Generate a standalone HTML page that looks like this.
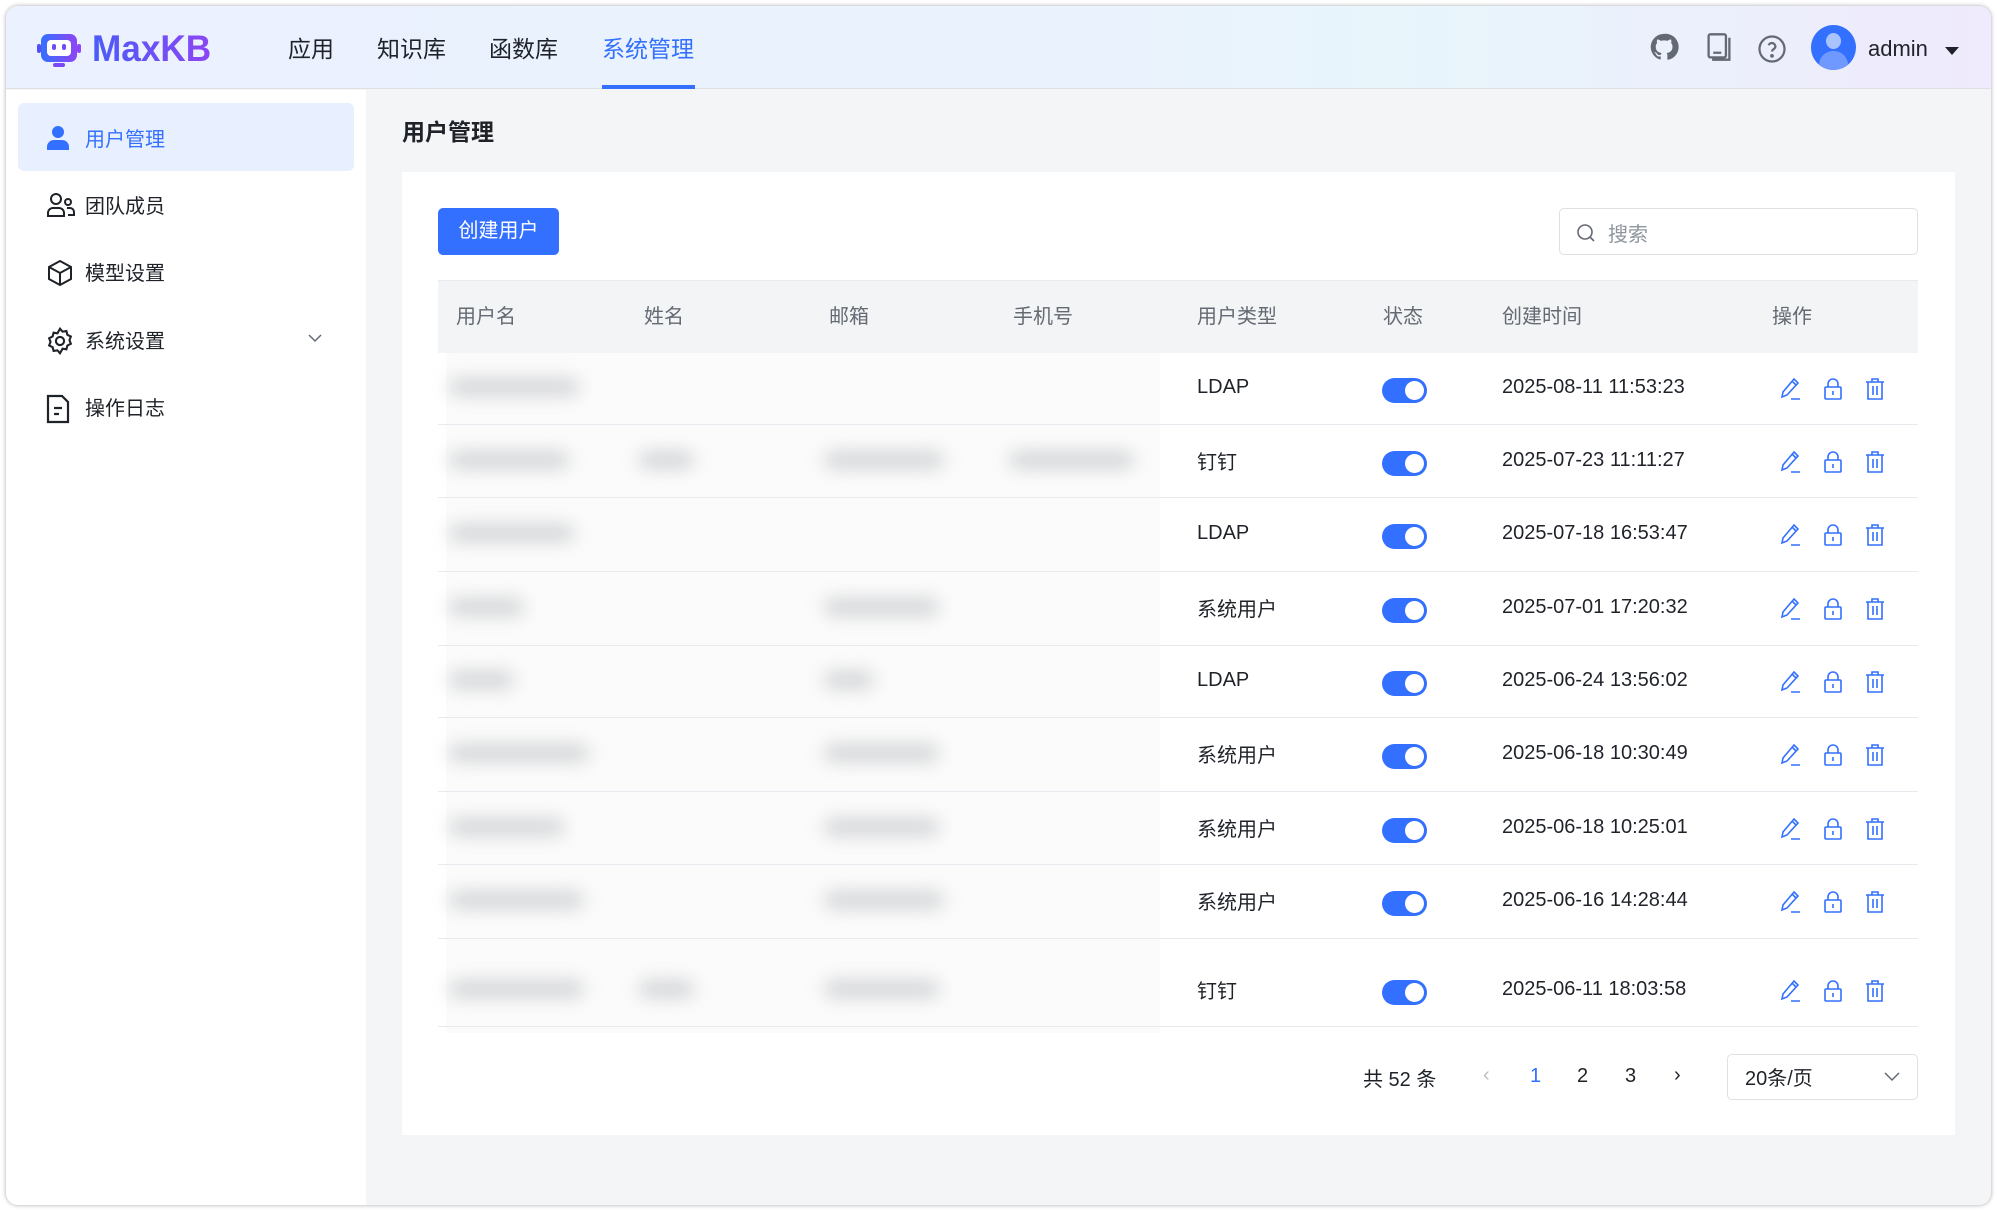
<!DOCTYPE html>
<html><head><meta charset="utf-8"><style>
*{box-sizing:border-box;margin:0;padding:0}
body{width:1997px;height:1211px;background:#fff;font-family:"Liberation Sans","Noto Sans CJK SC",sans-serif;color:#1f2329;position:relative;overflow:hidden}
.app{position:absolute;left:6px;top:6px;width:1985px;height:1199px;border-radius:12px;overflow:hidden;background:#f4f5f7;box-shadow:0 0 4px rgba(0,0,0,.35)}
.hdr{position:absolute;left:0;top:0;width:100%;height:83px;background:linear-gradient(90deg,#ebf1ff 0%,#eaf2fd 55%,#e8f5fb 70%,#efeafc 100%);border-bottom:1px solid #dee0e3}
.abs{position:absolute}
.nav{position:absolute;top:24px;font-size:23px;color:#1f2329}
.side{position:absolute;left:0;top:84px;width:360px;height:1115px;background:#fff}
.si{position:absolute;left:12px;width:336px;height:68px;font-size:20px;display:flex;align-items:center;padding-left:67px;border-radius:6px}
.si svg{position:absolute;left:28px;top:22px}
.card{position:absolute;left:396px;top:166px;width:1553px;height:963px;background:#fff}
.th{position:absolute;font-size:20px;color:#646a73}
.cell{position:absolute;font-size:20px;color:#1f2329}
.line{position:absolute;left:36px;width:1480px;height:1px;background:#e8eaef}
.tg{position:absolute;left:980px;width:45px;height:25px;border-radius:13px;background:#3370ff}
.tg:after{content:"";position:absolute;right:3px;top:3px;width:19px;height:19px;border-radius:50%;background:#fff}
.blob{position:absolute;height:16px;background:#cfd1d3;filter:blur(9px);border-radius:8px}
</style></head><body>
<div class="app">
<div class="hdr">
 <svg class="abs" style="left:30px;top:26px" width="46" height="40" viewBox="0 0 46 40"><defs><linearGradient id="lg" x1="0" x2="1"><stop offset="0" stop-color="#3370ff"/><stop offset="1" stop-color="#8e45f5"/></linearGradient></defs><rect x="5" y="2" width="36" height="28" rx="7" fill="url(#lg)"/><rect x="11" y="8" width="24" height="16" rx="4" fill="#fff"/><rect x="16" y="12" width="4" height="6" rx="2" fill="#6b4cf6"/><rect x="26" y="12" width="4" height="6" rx="2" fill="#6b4cf6"/><rect x="1" y="12" width="4" height="9" rx="2" fill="#5a4cf5"/><rect x="41" y="12" width="4" height="9" rx="2" fill="#8e45f5"/><rect x="17" y="31" width="12" height="4" rx="2" fill="#7a48f5"/></svg>
 <div class="abs" style="left:86px;top:22px;font-size:37px;font-weight:bold;background:linear-gradient(90deg,#4a5cf7,#8c46f5);-webkit-background-clip:text;color:transparent;transform:scaleX(0.95);transform-origin:left">MaxKB</div>
 <div class="nav" style="left:282px">应用</div>
 <div class="nav" style="left:371px">知识库</div>
 <div class="nav" style="left:483px">函数库</div>
 <div class="nav" style="left:596px;color:#3370ff">系统管理</div>
 <div class="abs" style="left:596px;top:79px;width:93px;height:4px;background:#3370ff"></div>
 <svg class="abs" style="left:1643px;top:26px" width="30" height="30" viewBox="0 0 24 24"><path fill="#646a73" d="M12 1.5A10.5 10.5 0 0 0 8.7 22c.5.1.7-.2.7-.5v-2c-2.9.6-3.5-1.2-3.5-1.2-.5-1.2-1.2-1.5-1.2-1.5-.9-.7.1-.6.1-.6 1 .1 1.6 1.1 1.6 1.1.9 1.6 2.5 1.1 3.1.9.1-.7.4-1.1.7-1.4-2.3-.3-4.8-1.2-4.8-5.2 0-1.1.4-2.1 1.1-2.8-.1-.3-.5-1.3.1-2.8 0 0 .9-.3 2.9 1.1a10 10 0 0 1 5.2 0c2-1.4 2.9-1.1 2.9-1.1.6 1.5.2 2.5.1 2.8.7.8 1.1 1.7 1.1 2.8 0 4-2.5 4.9-4.8 5.2.4.3.7 1 .7 2v2.9c0 .3.2.6.7.5A10.5 10.5 0 0 0 12 1.5z"/></svg>
 <svg class="abs" style="left:1699px;top:26px" width="28" height="30" viewBox="0 0 24 26" fill="none" stroke="#646a73" stroke-width="2"><rect x="3" y="2" width="15" height="20" rx="1.5"/><path d="M21 5v19H6M7 18h7"/></svg>
 <svg class="abs" style="left:1751px;top:28px" width="30" height="30" viewBox="0 0 24 24" fill="none" stroke="#646a73" stroke-width="1.8"><circle cx="12" cy="12" r="10"/><path d="M9.3 9a2.8 2.8 0 0 1 5.4 1c0 2-2.7 2.4-2.7 4"/><circle cx="12" cy="17.5" r=".6" fill="#646a73"/></svg>
 <div class="abs" style="left:1805px;top:19px;width:45px;height:45px;border-radius:50%;background:#3370ff;overflow:hidden"><div class="abs" style="left:15px;top:8px;width:15px;height:16px;border-radius:50%;background:#a9c3ff"></div><div class="abs" style="left:8px;top:26px;width:29px;height:24px;border-radius:14px 14px 0 0;background:#6f99ff"></div></div>
 <div class="abs" style="left:1862px;top:30px;font-size:22px">admin</div>
 <div class="abs" style="left:1939px;top:41px;border-left:7px solid transparent;border-right:7px solid transparent;border-top:8px solid #1f2329"></div>
</div>
<div class="side">
 <div class="si" style="top:13px;background:#e8efff;color:#3370ff"><svg width="24" height="26" viewBox="0 0 24 26"><circle cx="12" cy="7" r="6" fill="#3370ff"/><path d="M1 25v-3a7 7 0 0 1 7-7h8a7 7 0 0 1 7 7v3z" fill="#3370ff"/></svg>用户管理</div>
 <div class="si" style="top:80px"><svg width="30" height="26" viewBox="0 0 30 26" fill="none" stroke="#1f2329" stroke-width="2"><circle cx="10" cy="7" r="5"/><path d="M2 24v-3a5 5 0 0 1 5-5h6a5 5 0 0 1 5 5v3z"/><circle cx="22" cy="10" r="3"/><path d="M21 16h3a4 4 0 0 1 4 4v3h-6"/></svg>团队成员</div>
 <div class="si" style="top:147px"><svg width="28" height="28" viewBox="0 0 28 28" fill="none" stroke="#1f2329" stroke-width="2"><path d="M14 2l11 6v12l-11 6-11-6V8zM3 8l11 6 11-6M14 14v12"/></svg>模型设置</div>
 <div class="si" style="top:215px"><svg width="28" height="28" viewBox="0 0 24 24" fill="none" stroke="#1f2329" stroke-width="1.8"><circle cx="12" cy="12" r="3.5"/><path d="M12 1.5l2.2 2.5 3.3-.5.8 3.2 3 1.5-1.2 3.1 1.2 3.1-3 1.5-.8 3.2-3.3-.5L12 22.5l-2.2-2.5-3.3.5-.8-3.2-3-1.5 1.2-3.1-1.2-3.1 3-1.5.8-3.2 3.3.5z"/></svg>系统设置<svg style="left:290px;top:28px" width="14" height="10" viewBox="0 0 14 10" fill="none" stroke="#646a73" stroke-width="1.5"><path d="M1 2l6 6 6-6"/></svg></div>
 <div class="si" style="top:282px"><svg width="24" height="30" viewBox="0 0 24 30" fill="none" stroke="#1f2329" stroke-width="2.2"><path d="M2 2h14l6 6v20H2z"/><path d="M8 14h8M8 20h5"/></svg>操作日志</div>
</div>
<div class="abs" style="left:396px;top:107px;font-size:23px;font-weight:bold">用户管理</div>
<div class="card">
 <div class="abs" style="left:36px;top:36px;width:121px;height:47px;background:#3370ff;border-radius:5px;color:#fff;font-size:20px;line-height:47px;text-align:center">创建用户</div>
 <div class="abs" style="left:1157px;top:36px;width:359px;height:47px;border:1px solid #dee0e3;border-radius:5px"><svg class="abs" style="left:16px;top:14px" width="20" height="20" viewBox="0 0 20 20" fill="none" stroke="#646a73" stroke-width="1.6"><circle cx="9" cy="9" r="7"/><path d="M14 14l4 4"/></svg><div class="abs" style="left:48px;top:9px;font-size:20px;color:#8f959e">搜索</div></div>
 <div class="abs" style="left:36px;top:108px;width:1480px;height:73px;background:#f3f4f6;border-top:1px solid #e8eaef"></div>
 <div class="th" style="left:54px;top:128px">用户名</div><div class="th" style="left:242px;top:128px">姓名</div><div class="th" style="left:427px;top:128px">邮箱</div><div class="th" style="left:611px;top:128px">手机号</div><div class="th" style="left:795px;top:128px">用户类型</div><div class="th" style="left:981px;top:128px">状态</div><div class="th" style="left:1100px;top:128px">创建时间</div><div class="th" style="left:1370px;top:128px">操作</div>
 <div class="abs" style="left:44px;top:181px;width:714px;height:680px;background:#fbfbfb"></div>
 <div id="rows"></div>
 <div class="abs" style="left:961px;top:891px;font-size:20px">共 52 条</div>
 <div class="abs" style="left:1081px;top:892px;font-size:20px;color:#bbbfc4">‹</div>
 <div class="abs" style="left:1128px;top:893px;font-size:20px;color:#3370ff">1</div>
 <div class="abs" style="left:1175px;top:893px;font-size:20px">2</div>
 <div class="abs" style="left:1223px;top:893px;font-size:20px">3</div>
 <div class="abs" style="left:1272px;top:892px;font-size:20px">›</div>
 <div class="abs" style="left:1325px;top:882px;width:191px;height:46px;border:1px solid #dee0e3;border-radius:5px"><div class="abs" style="left:17px;top:7px;font-size:20px">20条/页</div><svg class="abs" style="left:156px;top:17px" width="16" height="10" viewBox="0 0 16 10" fill="none" stroke="#646a73" stroke-width="1.5"><path d="M1 1l7 7 7-7"/></svg></div>
</div>
</div>
<script>
var rows=[["LDAP","2025-08-11 11:53:23",[[455,130]]],["钉钉","2025-07-23 11:11:27",[[455,120],[645,55],[830,120],[1015,125]]],["LDAP","2025-07-18 16:53:47",[[455,125]]],["系统用户","2025-07-01 17:20:32",[[455,75],[830,115]]],["LDAP","2025-06-24 13:56:02",[[455,65],[830,50]]],["系统用户","2025-06-18 10:30:49",[[455,140],[830,115]]],["系统用户","2025-06-18 10:25:01",[[455,115],[830,115]]],["系统用户","2025-06-16 14:28:44",[[455,135],[830,120]]],["钉钉","2025-06-11 18:03:58",[[455,135],[645,55],[830,115]]]];
var b=[353,425,498,572,646,718,792,865,939,1027],h="";
var ic='<svg width="22" height="24" viewBox="0 0 22 24" fill="none" stroke="#3370ff" stroke-width="1.6">';
for(var i=0;i<9;i++){var t=b[i]-172,bt=b[i+1]-172,c=(t+bt)/2;
if(i==8)c+=8;
var cjk=/[^A-Z]/.test(rows[i][0]);
h+='<div class="line" style="top:'+(bt-1)+'px"></div>';
h+='<div class="cell" style="left:795px;top:'+(c-(cjk?16:13))+'px">'+rows[i][0]+'</div>';
h+='<div class="tg" style="top:'+(c-11)+'px"></div>';
h+='<div class="cell" style="left:1100px;top:'+(c-13)+'px">'+rows[i][1]+'</div>';
h+='<div class="abs" style="left:1378px;top:'+(c-12)+'px">'+ic+'<path d="M14 2l4 4-11 12-5 2 1-5zM12 4l4 4M11 22h9"/></svg></div>';
h+='<div class="abs" style="left:1420px;top:'+(c-12)+'px">'+ic+'<rect x="3" y="10" width="16" height="12" rx="1"/><path d="M6 10V7a5 5 0 0 1 10 0v3M11 14v4"/></svg></div>';
h+='<div class="abs" style="left:1462px;top:'+(c-12)+'px">'+ic+'<path d="M2 5h18M8 5V2h6v3M4 5v17h14V5M9 9v9M13 9v9"/></svg></div>';
rows[i][2].forEach(function(p){h+='<div class="blob" style="left:'+(p[0]-408)+'px;top:'+(c-10)+'px;width:'+p[1]+'px"></div>';});
}
document.getElementById('rows').innerHTML=h;
</script>
</body></html>
